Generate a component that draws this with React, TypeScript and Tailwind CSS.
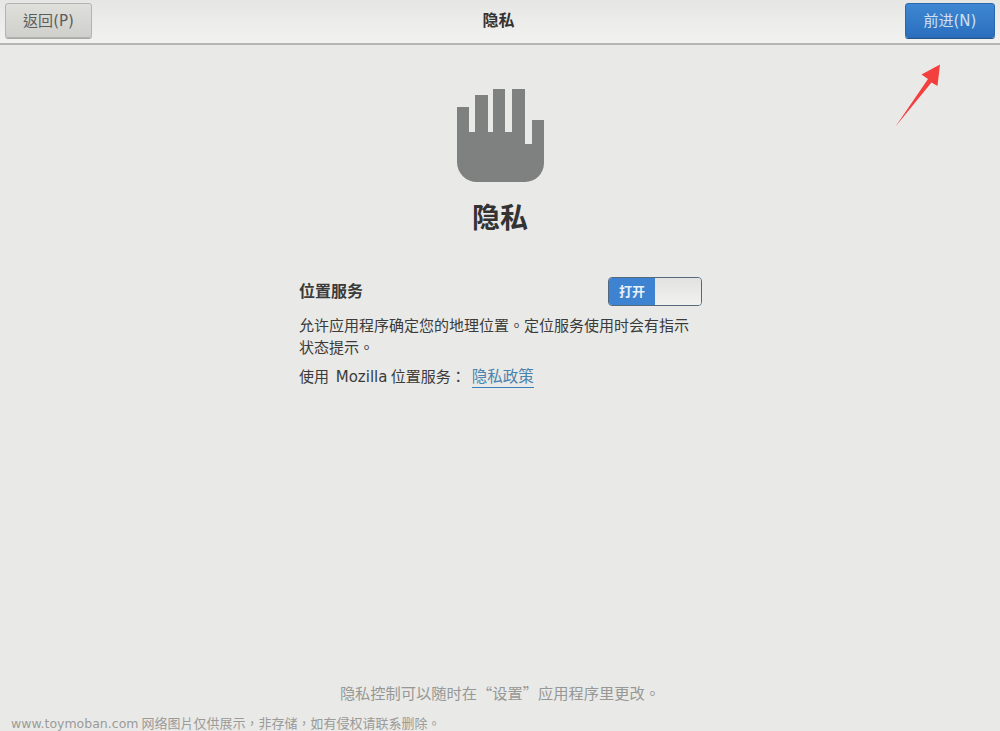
const cjk = "font-['Noto_Sans_CJK_TC','DejaVu_Sans',sans-serif]";
const latin = "font-['DejaVu_Sans',sans-serif]";

function HandIcon() {
  return (
    <svg width="87" height="94" viewBox="0 0 87 94" className="block">
      <path
        d="M0 18H12V43H18V6H31V43H36V0H48V43H55V0H68V55H75V31H87V74A19 19 0 0 1 68 93H20A20 20 0 0 1 0 73Z"
        fill="#7f8180"
      />
    </svg>
  );
}

function RedArrow() {
  return (
    <svg width="50" height="66" viewBox="0 0 50 66" className="absolute left-[893px] top-[62px]">
      <path d="M2.500 64.500L35 17L28.500 12.500L47 2.500L44.500 24L38.500 20.500Z" fill="#f43f3f" />
    </svg>
  );
}

export default function App() {
  return (
    <div className={`relative h-[731px] w-[1000px] overflow-hidden bg-[#e9e9e7] ${cjk}`}>
      {/* header */}
      <div className="flex h-[45px] items-start justify-between border-b-2 border-[#b5b6b2] bg-gradient-to-b from-[#e6e6e4] to-[#f2f2f0] px-[5px] pt-[3px]">
        <button className="h-[35px] w-[87px] rounded-[3px] border border-[#b3b3b0] bg-gradient-to-b from-[#dfdfdc] to-[#cfcfcc] text-[15px] text-[#5c5e5c] shadow-[0_1px_0_#a9a9a6]">
          返回<span className={latin}>(P)</span>
        </button>
        <div className="pt-[4px] text-[16px] leading-[24px] font-bold text-[#333]">隐私</div>
        <button className="h-[35px] w-[90px] rounded-[3px] border border-[#2a68ad] bg-gradient-to-b from-[#3f87d2] to-[#2a6fbe] text-[15px] text-[#cfe0f0] shadow-[0_1px_0_#23568f]">
          前进<span className={latin}>(N)</span>
        </button>
      </div>

      {/* main */}
      <div className="flex flex-col items-center pt-[44px]">
        <HandIcon />
        <h1 className="mt-[13px] text-[28px] leading-[40px] font-bold text-[#333]">隐私</h1>

        <div className="mt-[41px] ml-[1px] w-[403px] text-[15px] text-[#3a3b3a]">
          <div className="flex items-start justify-between">
            <span className="text-[16px] leading-[26px] font-bold">位置服务</span>
            <div className="flex h-[29px] w-[94px] overflow-hidden rounded-[4px] border border-[#56687c]">
              <div className="flex w-[46px] items-center justify-center bg-[#3d83d1] pb-[2px] text-[13px] font-bold text-[#e8f0f8]">
                打开
              </div>
              <div className="flex-1 bg-gradient-to-b from-[#e2e2e0] to-[#f1f1ef]" />
            </div>
          </div>
          <p className="mt-[8px] leading-[22px]">
            允许应用程序确定您的地理位置。定位服务使用时会有指示状态提示。
          </p>
          <div className="mt-[6px] flex items-start leading-[23px]">
            <span className="whitespace-pre">
              使用  <span className={latin}>Mozilla</span> 位置服务：
            </span>
            <a className="ml-[6px] border-b border-[#3d7fb8] text-[15.500px] leading-[23px] text-[#4a83ad]">隐私政策</a>
          </div>
        </div>
      </div>

      {/* footer hint */}
      <div className="absolute inset-x-0 top-[681px] text-center text-[15.250px] leading-[22px] text-[#969895]">
        隐私控制可以随时在“设置”应用程序里更改。
      </div>

      {/* annotation and watermark */}
      <RedArrow />
      <div className="absolute left-[11px] top-[713px] whitespace-nowrap text-[13px] leading-[20px] text-[#9a9b99]">
        <span className={`${latin} text-[12.500px]`}>www.toymoban.com</span> 网络图片仅供展示，非存储，如有侵权请联系删除。
      </div>
    </div>
  );
}
